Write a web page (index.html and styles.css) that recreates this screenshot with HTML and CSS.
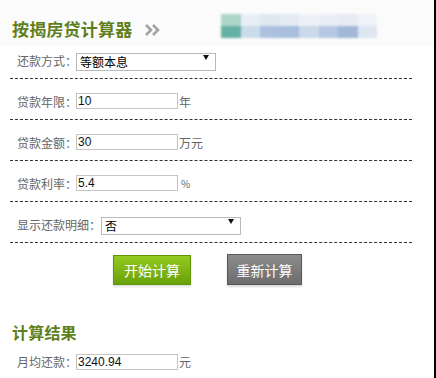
FILE: index.html
```html
<!DOCTYPE html>
<html lang="zh-CN">
<head>
  <meta charset="UTF-8">
  <meta name="viewport" content="width=device-width, initial-scale=1.0">
  <title>按揭房贷计算器</title>
  <link rel="stylesheet" href="styles.css">
</head>
<body>
  <div class="page">
    <div class="header">
      <h1 class="title">按揭房贷计算器</h1>
      <svg class="chevron" width="16" height="12" viewBox="0 0 16 12">
        <path d="M1 1 L6 6 L1 11 M8 1 L13 6 L8 11" fill="none" stroke="#a3a3a3" stroke-width="2.6"/>
      </svg>
      <div class="blur">
        <div class="blur-row">
          <span style="background:#a9d3c6"></span><span style="background:#e6eef5"></span><span style="background:#dfe7f2"></span><span style="background:#e3eaf4"></span><span style="background:#edf1f7"></span><span style="background:#e9eef6"></span><span style="background:#e5ebf4"></span><span style="background:#f0f3f8"></span>
        </div>
        <div class="blur-row">
          <span style="background:#5fae9f"></span><span style="background:#c8dbea"></span><span style="background:#a9bedd"></span><span style="background:#a4bcdc"></span><span style="background:#c9d8ea"></span><span style="background:#b2c5e1"></span><span style="background:#9fb5d8"></span><span style="background:#dce5f1"></span>
        </div>
      </div>
    </div>

    <div class="form">
      <div class="row first">
        <label class="label">还款方式：</label>
        <span class="select-wrap wide">
          <select class="select"><option>等额本息</option><option>等额本金</option></select>
        </span>
      </div>
      <div class="row">
        <label class="label">贷款年限：</label>
        <input class="field" type="text" value="10"><span class="unit">年</span>
      </div>
      <div class="row">
        <label class="label">贷款金额：</label>
        <input class="field" type="text" value="30"><span class="unit">万元</span>
      </div>
      <div class="row">
        <label class="label">贷款利率：</label>
        <input class="field" type="text" value="5.4"><span class="unit small">%</span>
      </div>
      <div class="row">
        <label class="label">显示还款明细：</label>
        <span class="select-wrap">
          <select class="select"><option>否</option><option>是</option></select>
        </span>
      </div>
    </div>

    <div class="buttons">
      <button class="btn btn-green">开始计算</button>
      <button class="btn btn-gray">重新计算</button>
    </div>

    <h2 class="title result-title">计算结果</h2>
    <div class="result-row">
      <label class="label">月均还款：</label>
      <input class="field" type="text" value="3240.94"><span class="unit">元</span>
    </div>
  </div>
</body>
</html>
```
FILE: styles.css
```css
body {
  margin: 0;
  background: #fff;
  font-family: "Noto Sans CJK SC", "Noto Sans", sans-serif;
}
.page {
  width: 436px;
  height: 378px;
  box-sizing: border-box;
  border-right: 2px solid #000;
  overflow: hidden;
}
.header {
  height: 46px;
  background: #fbfbfb;
  display: flex;
  align-items: center;
  padding-left: 12px;
  padding-top: 10px;
  box-sizing: border-box;
}
.title {
  margin: 0;
  font-size: 17px;
  font-weight: bold;
  color: #5f7f1c;
  letter-spacing: 0.2px;
}
.chevron {
  margin-left: 13px;
  margin-top: 3px;
}
.blur {
  margin-left: 60px;
  margin-top: -4px;
  filter: blur(0.8px);
  opacity: 0.95;
}
.blur-row {
  display: flex;
}
.blur-row span {
  display: block;
  width: 19.5px;
  height: 12px;
}
.form {
  width: 402px;
  margin-left: 10px;
}
.row {
  display: flex;
  align-items: center;
  padding: 14px 0 10px 7px;
  border-bottom: 1px dashed #333;
  height: 16px;
}
.row.first {
  padding-top: 4px;
  padding-bottom: 8px;
  height: 20px;
}
.label {
  font-size: 12px;
  color: #666;
  width: 59px;
  white-space: nowrap;
}
.field {
  width: 102px;
  height: 16px;
  box-sizing: border-box;
  border: 1px solid #c4c4c4;
  padding: 0 1px;
  font-family: "Liberation Sans", Arial, sans-serif;
  font-size: 12px;
  color: #111;
  outline: none;
}
.unit {
  font-size: 12px;
  color: #666;
  margin-left: 1px;
}
.unit.small {
  font-size: 10px;
  margin-left: 3px;
}
.select-wrap {
  position: relative;
  display: inline-block;
  width: 140px;
  margin-left: 25px;
}
.select-wrap.wide {
  margin-left: 0;
}
.select-wrap::after {
  content: "";
  position: absolute;
  right: 7px;
  top: 7px;
  width: 0;
  height: 0;
  border-left: 3px solid transparent;
  border-right: 3px solid transparent;
  border-top: 5px solid #111;
  pointer-events: none;
}
.select {
  -webkit-appearance: none;
  appearance: none;
  width: 100%;
  height: 18px;
  border: 1px solid #b9b9b9;
  border-radius: 0;
  background: #fff;
  padding: 0 3px;
  font-family: "Noto Sans CJK SC", sans-serif;
  font-size: 12px;
  line-height: 16px;
  color: #000;
  outline: none;
}
.buttons {
  display: flex;
  margin: 12px 0 0 113px;
  gap: 36px;
  align-items: flex-start;
}
.btn {
  border: none;
  color: #fff;
  font-family: "Noto Sans CJK SC", sans-serif;
  font-size: 14px;
  padding: 0;
  cursor: pointer;
}
.btn-green {
  width: 78px;
  height: 30px;
  background: linear-gradient(#94c920, #69a208);
  border: 1px solid #5f9406;
  box-shadow: 0 2px 2px rgba(0, 0, 0, 0.12);
}
.btn-gray {
  width: 75px;
  height: 31px;
  margin-top: -1px;
  background: linear-gradient(#8c8c8c, #6c6c6c);
  border: 1px solid #5a5a5a;
  box-shadow: 0 2px 2px rgba(0, 0, 0, 0.15);
}
.result-title {
  margin: 35px 0 0 12px;
  font-size: 16px;
}
.result-row {
  display: flex;
  align-items: center;
  margin: 9px 0 0 17px;
}
```
